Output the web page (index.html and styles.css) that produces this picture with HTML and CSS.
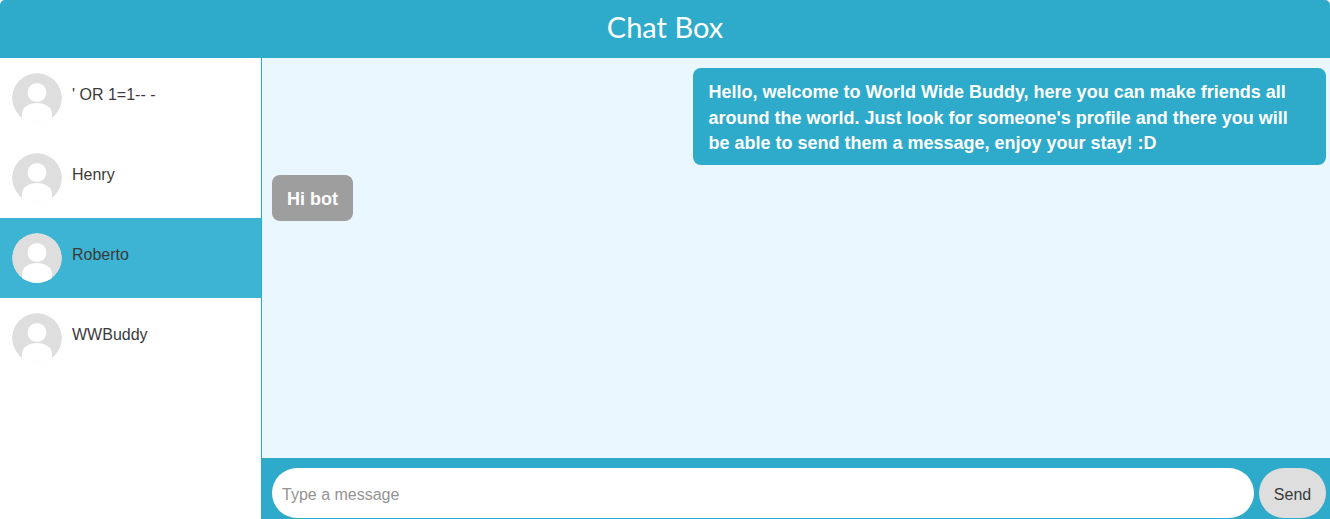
FILE: index.html
```html
<!DOCTYPE html>
<html>
<head>
    <meta name="viewport" content="width=device-width, initial-scale=1.0">
    <link rel="stylesheet" href="styles.css">
</head>
<body>
    <div class="chat-box">
        <div class="titulo">Chat Box</div>
        <div class="conteudo">
            <div class="contatos">
                <div class="contato">
                    <svg class="avatar" viewBox="0 0 50 50"><circle cx="25" cy="25" r="25" fill="#dedede"/><circle cx="25" cy="19.5" r="9.5" fill="#fff"/><path d="M10 50V41C10 34 17 30 25 30S40 34 40 41V50Z" fill="#fff"/></svg>
                    <span class="nome">' OR 1=1-- -</span>
                </div>
                <div class="contato">
                    <svg class="avatar" viewBox="0 0 50 50"><circle cx="25" cy="25" r="25" fill="#dedede"/><circle cx="25" cy="19.5" r="9.5" fill="#fff"/><path d="M10 50V41C10 34 17 30 25 30S40 34 40 41V50Z" fill="#fff"/></svg>
                    <span class="nome">Henry</span>
                </div>
                <div class="contato ativo">
                    <svg class="avatar" viewBox="0 0 50 50"><circle cx="25" cy="25" r="25" fill="#dedede"/><circle cx="25" cy="19.5" r="9.5" fill="#fff"/><path d="M10 50V41C10 34 17 30 25 30S40 34 40 41V50Z" fill="#fff"/></svg>
                    <span class="nome">Roberto</span>
                </div>
                <div class="contato">
                    <svg class="avatar" viewBox="0 0 50 50"><circle cx="25" cy="25" r="25" fill="#dedede"/><circle cx="25" cy="19.5" r="9.5" fill="#fff"/><path d="M10 50V41C10 34 17 30 25 30S40 34 40 41V50Z" fill="#fff"/></svg>
                    <span class="nome">WWBuddy</span>
                </div>
            </div>
            <div class="conversa">
                <div class="mensagens">
                    <div class="msg enviada">Hello, welcome to World Wide Buddy, here you can make friends all around the world. Just look for someone's profile and there you will be able to send them a message, enjoy your stay! :D</div>
                    <div class="msg recebida">Hi bot</div>
                </div>
                <div class="barra">
                    <input class="campo" type="text" placeholder="Type a message">
                    <button class="enviar">Send</button>
                </div>
            </div>
        </div>
    </div>
</body>
</html>
```

FILE: styles.css
```css
html, body {
    height: 100%;
}

body {
    margin: 0;
    font-family: "Liberation Sans", Arial, sans-serif;
    color: #333;
    background-color: #fff;
    overflow: hidden;
}

.chat-box {
    height: 519px;
    display: flex;
    flex-direction: column;
}

.titulo {
    height: 58px;
    line-height: 54px;
    flex-shrink: 0;
    text-align: center;
    font-family: "Lato", sans-serif;
    font-size: 29px;
    color: #fff;
    background-color: #2eaaca;
    border-radius: 5px 5px 0 0;
}

.conteudo {
    flex: 1;
    display: flex;
    min-height: 0;
}

.contatos {
    width: 261px;
    flex-shrink: 0;
    border-right: 1px solid #2eaaca;
}

.contato {
    height: 80px;
    box-sizing: border-box;
    padding: 15px 12px;
    display: flex;
    gap: 10px;
}

.ativo {
    background-color: #3db4d4;
}

.avatar {
    width: 50px;
    height: 50px;
    flex-shrink: 0;
    border-radius: 50%;
}

.nome {
    font-size: 16px;
    line-height: 18px;
    margin-top: 13px;
    color: #3a3a3a;
}

.conversa {
    flex: 1;
    display: flex;
    flex-direction: column;
    min-width: 0;
}

.mensagens {
    flex: 1;
    box-sizing: border-box;
    padding: 10px 4px 10px 10px;
    display: flex;
    flex-direction: column;
    align-items: flex-start;
    gap: 10px;
    background-color: #eaf7fe;
}

.msg {
    padding: 12px 15px 8px;
    font-size: 18px;
    font-weight: bold;
    line-height: 1.42857;
    color: #fff;
    border-radius: 8px;
}

.enviada {
    align-self: flex-end;
    width: 602.6px;
    background-color: #2eaaca;
}

.recebida {
    background-color: #9e9e9e;
}

.barra {
    height: 61px;
    flex-shrink: 0;
    box-sizing: border-box;
    padding: 10px 4px 1px 10px;
    display: flex;
    gap: 5px;
    background-color: #2eaaca;
}

.campo {
    flex: 1;
    min-width: 0;
    box-sizing: border-box;
    height: 50px;
    padding: 3px 10px 0;
    border: none;
    border-radius: 25px;
    font-family: "Liberation Sans", Arial, sans-serif;
    font-size: 16px;
    background-color: #fff;
}

.campo::placeholder {
    color: #949494;
}

.enviar {
    width: 67px;
    height: 50px;
    padding: 3px 0 0;
    border: none;
    border-radius: 25px;
    font-family: "Liberation Sans", Arial, sans-serif;
    font-size: 16px;
    color: #3a3a3a;
    background-color: #dedede;
}
```
